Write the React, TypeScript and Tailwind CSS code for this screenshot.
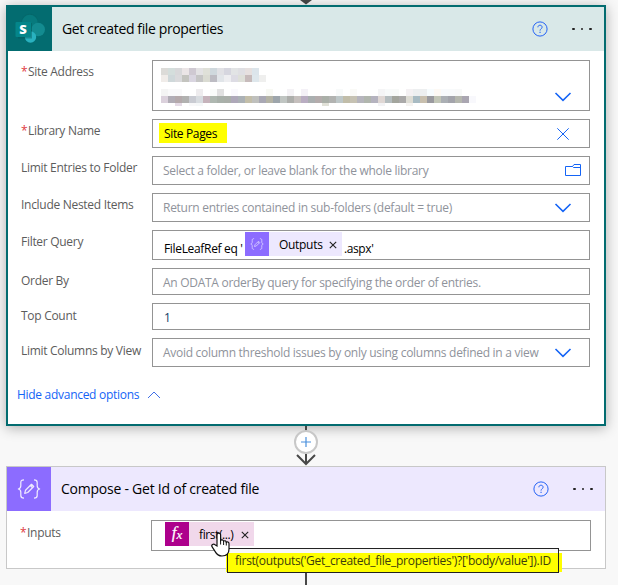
import type { ReactNode } from 'react';

const siteName = [
  ['#dcdbd8', '#d4dedc', '#d8d8da', '#ebe5e6', '#cfc9d2', '#e3e2e4', '#dfe0d8', '#cfd8dd', '#e1e1e5', '#d6d6df', '#e2e4e5', '#dfdfe3', '#e6e0df', '#dce5eb'],
  ['#f0ece9', '#cfd8da', '#dadadc', '#c4c4bf', '#d9d5e0', '#c5c5c5', '#dadbd2', '#bdbcc3', '#e1e5e9', '#eeeef1', '#dddce4', '#dee0d9', '#c7bbbb', '#dee7ec', '#efefee'],
];

const siteUrl = [
  ['#f4f4f4', '#f9f9fa', '#f9f9fa', '#fff', '#fff', '#eeecee', '#fff', '#fafcfa', '#e1e1e1', '#fff', '#faf9fd', '#fff', '#fff', '#fff', '#fff', '#f8f9f4', '#fff', '#fff', '#f4f2f5', '#fff', '#f4f1f7', '#fff', '#fff', '#fff', '#fff', '#f8fafa', '#fff', '#fafaf7', '#fff', '#fff', '#fff', '#f5f5f6', '#f8fafa', '#f8faf9', '#fff', '#f4f1f3', '#edeff0', '#edeff0', '#f7fcfe', '#fdf9f4', '#f8fafc', '#f8fafb', '#f8f9f9'],
  ['#dbd1dc', '#b1adb6', '#b4a9ab', '#b1b1b0', '#c9cbd2', '#d8dce0', '#c6b3bb', '#afb8b1', '#a9b1aa', '#aaafa9', '#aea8b9', '#abb1b5', '#c3bea9', '#bfc0bd', '#a9a8b4', '#b4b3a5', '#9da5ab', '#c0c5c2', '#adaeab', '#c5bfbd', '#b9adc2', '#aaafb0', '#b4acac', '#aaafa8', '#b2b3b1', '#bec7c8', '#c1bda9', '#c6c2b3', '#b6b5bd', '#b1b6ae', '#b5b3bf', '#dfd7d4', '#b5bdbf', '#a3a59d', '#aaa9a9', '#deddd5', '#a8bbc3', '#c8bfae', '#9a9a9f', '#c2c6b7', '#abafb4', '#a3a4ab', '#b5b7ae', '#aaa6b1', '#f8f8fc'],
];
const urlTail = ['#fff', '#fff', '#e5dbe6', '#fff', '#f8f8f9', '#f5f7f8', '#fff', '#fff', '#fff', '#fff', '#fff', '#fff', '#fff', '#fff', '#fff', '#fff', '#fff', '#fff', '#fff', '#fff', '#fff', '#fff', '#fff', '#e1e1d8', '#fff', '#fff', '#fff', '#fff', '#fff', '#fff', '#fff', '#f3f3f5', '#fff', '#fff', '#fff', '#f5f3f1'];

function Cells({ colors, short = false }: { colors: string[]; short?: boolean }) {
  return (
    <div className="flex">
      {colors.map((c, i) => (
        <span key={i} className={short ? 'h-[3px] w-[7px] shrink-0' : 'size-[7px] shrink-0'} style={{ backgroundColor: c }} />
      ))}
    </div>
  );
}

function Chevron() {
  return (
    <svg width="18" height="12" viewBox="0 0 18 12" fill="none" stroke="#1464f6" strokeWidth="1.6">
      <path d="M1.5 2 9 9.3 16.5 2" />
    </svg>
  );
}

function Help() {
  return (
    <svg width="16" height="16" viewBox="0 0 16 16" fill="none" stroke="#2563f5">
      <circle cx="8" cy="8" r="7.1" strokeWidth="1" />
      <path d="M5.9 6.300c0-1.300.900-2.100 2.100-2.100s2.100.8 2.100 2c0 1.600-2.050 1.700-2.050 3.400" strokeWidth="1" />
      <path d="M8.050 10.800v1.200" strokeWidth="1.100" />
    </svg>
  );
}

function Dots() {
  return (
    <span className="flex gap-[6px]">
      <i className="size-[2.500px] rounded-full bg-[#222]" />
      <i className="size-[2.500px] rounded-full bg-[#222]" />
      <i className="size-[2.500px] rounded-full bg-[#222]" />
    </span>
  );
}

function SharePointIcon() {
  return (
    <svg width="32" height="32" viewBox="0 0 32 32">
      <circle cx="15.800" cy="9.200" r="8.400" fill="#05686b" />
      <circle cx="15.800" cy="9.600" r="7.800" fill="#077a7d" />
      <circle cx="24.200" cy="16.500" r="6.800" fill="#138b90" />
      <circle cx="16.500" cy="24" r="5.700" fill="#29b1bf" />
      <path d="M4 10h14v15.500H4z" fill="#04595b" opacity=".45" />
      <rect x="1.500" y="9" width="15.500" height="15" rx="1" fill="#04868a" />
      <text x="9" y="21" textAnchor="middle" fontSize="13" fontWeight="800" fill="#fff" fontFamily="Open Sans, sans-serif">S</text>
    </svg>
  );
}

function BracesIcon({ size, color }: { size: number; color: string }) {
  return (
    <svg width={size} height={size} viewBox="0 0 24 24" fill="none" stroke={color} strokeWidth="1.250" strokeLinejoin="round">
      <path d="M7 2.800c-2.300 0-3.200.8-3.200 2.700v3.300c0 1.900-.8 2.900-2.500 3.200 1.700.3 2.500 1.300 2.500 3.200v3.300c0 1.900.9 2.700 3.200 2.700" />
      <path d="M17 2.800c2.300 0 3.200.8 3.200 2.700v3.300c0 1.900.8 2.900 2.500 3.200-1.700.3-2.500 1.300-2.500 3.200v3.300c0 1.900-.9 2.700-3.200 2.700" />
      <path d="m7.700 16.300.8-3 6-6 2.200 2.200-6 6zM13.300 8.500l2.200 2.200" />
    </svg>
  );
}

function Label({ children, required = false }: { children: ReactNode; required?: boolean }) {
  return (
    <span className="flex w-[131px] shrink-0 pt-1 text-xs leading-4 tracking-[-0.290px] whitespace-nowrap text-[#5c5c5c]">
      {required && <span className="w-[7px] text-[#e0393e]">*</span>}
      {children}
    </span>
  );
}

function Placeholder({ children }: { children: ReactNode }) {
  return <span className="text-xs tracking-[-0.280px] whitespace-nowrap text-[#8f939b]">{children}</span>;
}

function Close() {
  return (
    <svg width="8" height="8" viewBox="0 0 8 8" stroke="#222" strokeWidth="1.100">
      <path d="m.8.800 6.400 6.400M7.200.800.8 7.200" />
    </svg>
  );
}

export default function App() {
  return (
    <div className="relative flex h-[585px] w-[618px] flex-col overflow-hidden bg-[#f8f8f8] pl-1.5 font-['Open_Sans','Noto_Sans',sans-serif] text-black">
      <div className="flex h-[5px] w-[600px] shrink-0 justify-center">
        <svg width="12" height="5" viewBox="0 0 12 5">
          <path d="M0 0h12L6 4.500z" fill="#484848" />
        </svg>
      </div>

      <section className="h-[421px] w-[600px] shrink-0 border-2 border-[#036c70] bg-white shadow-[0_2px_12px_rgba(0,0,0,0.300)]">
        <header className="flex h-11 items-center bg-[#d9e8e8]">
          <span className="flex size-11 items-center justify-center bg-[#036c70]">
            <SharePointIcon />
          </span>
          <h2 className="flex-1 pl-2.5 text-sm tracking-[-0.370px] whitespace-nowrap">Get created file properties</h2>
          <Help />
          <span className="flex w-14 pl-6"><Dots /></span>
        </header>

        <div className="flex flex-col gap-2 pt-[9px] pr-3.5 pl-[13px]">
          <div className="flex">
            <Label required>Site Address</Label>
            <div className="flex h-[51px] flex-1 border border-[#949494]">
              <div className="w-[401px] pt-[7px] pl-2">
                <div>{siteName.map((row, i) => <Cells key={i} colors={row} />)}</div>
                <div className="mt-[7px]">
                  {siteUrl.map((row, i) => <Cells key={i} colors={row} />)}
                  <Cells colors={urlTail} short />
                </div>
              </div>
              <span className="mt-[30px]"><Chevron /></span>
            </div>
          </div>

          <div className="flex">
            <Label required>Library Name</Label>
            <div className="flex h-[29px] flex-1 items-center justify-between border border-[#949494] pr-5 pl-1.5">
              <span className="mb-px flex h-5 w-[68px] items-center bg-[#ffff00] pt-0.5 pl-[5px] text-xs tracking-[-0.350px] whitespace-nowrap">Site Pages</span>
              <svg width="12" height="12" viewBox="0 0 12 12" stroke="#1464f6" strokeWidth="1">
                <path d="m.3.300 11.400 11.400M11.700.300.3 11.700" />
              </svg>
            </div>
          </div>

          <div className="flex">
            <Label>Limit Entries to Folder</Label>
            <div className="flex h-[29px] flex-1 items-center justify-between border border-[#949494] pr-2 pl-2.5">
              <Placeholder>Select a folder, or leave blank for the whole library</Placeholder>
              <svg className="mb-px" width="16" height="13" viewBox="0 0 16 13" fill="none" stroke="#1464f6" strokeWidth="1">
                <path d="M.5 2.500h7l1.500-2h6.500v11H.5zM7.500 2.500l1 1h7" />
              </svg>
            </div>
          </div>

          <div className="flex">
            <Label>Include Nested Items</Label>
            <div className="flex h-[29px] flex-1 items-center justify-between border border-[#949494] pr-[17px] pl-2.5">
              <Placeholder>Return entries contained in sub-folders (default = true)</Placeholder>
              <Chevron />
            </div>
          </div>

          <div className="flex">
            <Label>Filter Query</Label>
            <div className="flex h-[30px] flex-1 border border-[#949494] pt-px pl-[11px] text-xs whitespace-nowrap">
              <span className="w-[81px] pt-[9px] tracking-[-0.330px]">FileLeafRef eq '</span>
              <span className="flex h-6 w-[97px] items-center bg-[#ede8fe]">
                <span className="flex size-6 items-center justify-center bg-[#8c6cff]"><BracesIcon size={14} color="#e5ddff" /></span>
                <span className="w-[50px] pt-px pl-2.5 tracking-[-0.300px]">Outputs</span>
                <span className="pt-0.5 pl-2.5"><Close /></span>
              </span>
              <span className="pt-[9px] pl-0.5 tracking-[-0.400px]">.aspx'</span>
            </div>
          </div>

          <div className="flex">
            <span className="pt-px"><Label>Order By</Label></span>
            <div className="flex h-[27px] flex-1 items-center border border-[#949494] pt-[3px] pl-2.5">
              <Placeholder>An ODATA orderBy query for specifying the order of entries.</Placeholder>
            </div>
          </div>

          <div className="flex">
            <span className="pt-px"><Label>Top Count</Label></span>
            <div className="flex h-[27px] flex-1 items-center border border-[#949494] pt-0.5 pl-[11px] text-xs text-[#123c66]">1</div>
          </div>

          <div className="flex">
            <span className="pt-px"><Label>Limit Columns by View</Label></span>
            <div className="flex h-[29px] flex-1 items-center justify-between border border-[#949494] pr-[17px] pl-2.5">
              <Placeholder>Avoid column threshold issues by only using columns defined in a view</Placeholder>
              <Chevron />
            </div>
          </div>
        </div>

        <div className="mt-5 flex items-center gap-2 pl-[9px] text-xs leading-4 whitespace-nowrap text-[#1464f6]">
          <span className="w-[122px] tracking-[-0.290px]">Hide advanced options</span>
          <svg width="14" height="8" viewBox="0 0 14 8" fill="none" stroke="#3f6fe8" strokeWidth="1">
            <path d="M1 7 7 1l6 6" />
          </svg>
        </div>
      </section>

      <div className="flex h-10 w-[600px] shrink-0 justify-center">
        <svg className="relative" width="24" height="40" viewBox="0 0 24 40" fill="none">
          <path d="M12 0v5M12 28v10" stroke="#484848" strokeWidth="2" />
          <path d="m3 29 9 9 9-9" stroke="#484848" strokeWidth="2" />
          <circle cx="12" cy="16" r="11" fill="#fff" stroke="#c8c8c8" strokeWidth="2" />
          <path d="M7 16h10M12 11v10" stroke="#4a90dd" strokeWidth="1.200" />
        </svg>
      </div>

      <section className="h-[103px] w-[600px] shrink-0 border border-[#c8c8c8] bg-white">
        <header className="flex h-11 items-center bg-[#ede8fe]">
          <span className="flex size-11 items-center justify-center bg-[#8c6cff]"><BracesIcon size={24} color="#eee9ff" /></span>
          <h2 className="flex-1 pl-2.5 text-sm tracking-[-0.240px] whitespace-nowrap">Compose - Get Id of created file</h2>
          <Help />
          <span className="flex w-14 pl-6"><Dots /></span>
        </header>
        <div className="flex pt-[9px] pr-3.5 pl-[13px]">
          <span className="pt-px"><Label required>Inputs</Label></span>
          <div className="flex h-[31px] flex-1 border border-[#949494] pt-px pl-[13px]">
            <span className="relative flex h-6 w-[89px] items-center bg-[#f1d8eb] text-xs whitespace-nowrap">
              <span className="flex size-6 items-center justify-center bg-[#ad008c] pb-0.5 font-['Liberation_Serif',serif] text-[17px] text-white italic [-webkit-text-stroke:0.200px_white]">
                f<span className="pt-1 text-[13px]">x</span>
              </span>
              <span className="w-[42px] pt-0.5 pl-2.5 tracking-[-0.400px]">first(...)</span>
              <span className="pt-0.5 pl-2.5"><Close /></span>
            </span>
          </div>
        </div>
      </section>

      <div className="flex w-[600px] flex-1 justify-center"><span className="w-0.5 bg-[#484848]" /></div>

      <div className="absolute top-[548px] left-[226px] h-[25px] w-[336px]">
        <div className="absolute top-0 left-px h-[5px] w-[332px] bg-[#f8f8f8]" />
        <div className="absolute inset-x-0 top-[5px] h-[19px] bg-[#ffff00]" />
        <div className="absolute top-0 left-px flex h-[25px] w-[332px] items-center border border-[#222] pt-px pl-[7px] text-xs tracking-[-0.280px] whitespace-nowrap text-[#3d3d0c]">
          first(outputs('Get_created_file_properties')?['body/value']).ID
        </div>
      </div>
      <svg className="absolute top-[532px] left-[211px]" width="19" height="25" viewBox="0 0 19 25">
        <path d="M6 14V3c0-2.600 3.600-2.600 3.600 0v5.500c.8-1.200 2.800-.8 3 .7.900-.9 2.600-.4 2.700 1 .9-.7 2.700-.2 2.700 1.500V17c0 4.500-2.600 7-7 7-3.700 0-5.300-1.600-6.800-4.400L1 14.700c-1-2 1.500-3.500 3-2z" fill="#fff" stroke="#111" strokeWidth="1.200" />
        <path d="M9.600 8v4.500M12.600 9v4M15.300 10v3.500" stroke="#111" strokeWidth="1" />
      </svg>
    </div>
  );
}
